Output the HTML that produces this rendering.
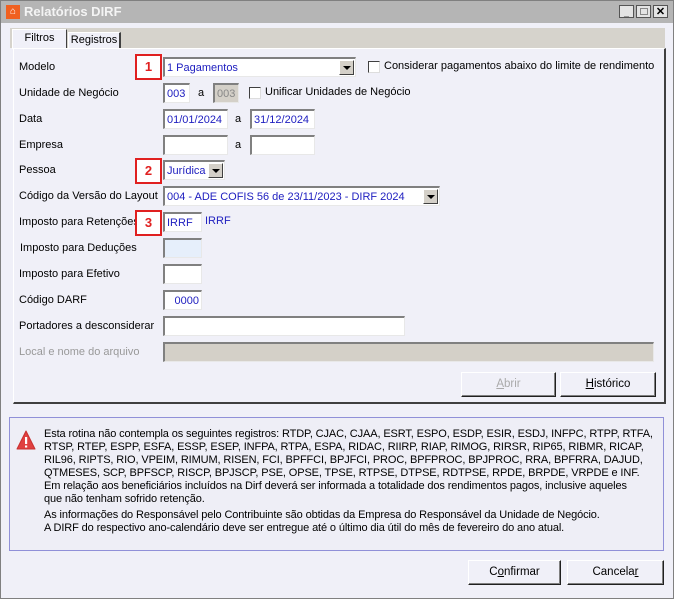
<!DOCTYPE html><html><head><meta charset="utf-8"><style>
*{margin:0;padding:0;box-sizing:border-box}
body{width:674px;height:599px;overflow:hidden;background:#f0f0f8;font-family:"Liberation Sans",sans-serif;font-size:11px;color:#000;position:relative}
.a{position:absolute;white-space:nowrap}
.lbl{position:absolute;left:19px;font-size:11px;white-space:nowrap}
.f{position:absolute;background:#fff;border-top:2px solid #808080;border-left:2px solid #808080;border-right:1px solid #e8e8e8;border-bottom:1px solid #e8e8e8;color:#2020c0;font-size:11px;padding:3px 0 0 2px;white-space:nowrap;overflow:hidden}
.dd{position:absolute;right:1px;top:1px;width:15px;bottom:1px;background:#d4d0c8;border:1px solid;border-color:#fff #404040 #404040 #fff}
.dd:after{content:"";position:absolute;left:3px;top:5px;border-left:4px solid transparent;border-right:4px solid transparent;border-top:4px solid #000}
.red{position:absolute;border:2px solid #e02020;color:#e02020;font-weight:bold;font-size:13px;text-align:center;width:27px;height:26px;line-height:22px;background:#fff}
.cb{position:absolute;width:12px;height:12px;background:#fff;border:1px solid #404040;border-right-color:#ddd;border-bottom-color:#ddd}
.btn{position:absolute;border:1px solid;border-color:#fff #202020 #202020 #fff;box-shadow:inset -1px -1px 0 #808080;background:#f0f0f8;text-align:center;font-size:11.5px;line-height:22px}
.info{position:absolute;left:44px;top:428px;font-size:11px;line-height:13px;letter-spacing:-0.12px;white-space:nowrap}
</style></head><body>
<div class="a" style="left:0;top:0;width:674px;height:599px;border:1px solid #808080"></div>
<div class="a" style="left:1px;top:1px;width:672px;height:22px;background:#b5b5b5"></div>
<div class="a" style="left:6px;top:5px;width:14px;height:14px;background:#f06020;color:#fff;font-size:10px;line-height:14px;text-align:center">⌂</div>
<div class="a" style="left:24px;top:4px;color:#f4f4f4;font-weight:bold;font-size:13px">Relatórios DIRF</div>
<div class="a" style="left:619px;top:5px;width:15px;height:13px;background:#e4e4e4;border:1px solid #555;font-size:9px;font-weight:bold;text-align:center;line-height:14px">_</div>
<div class="a" style="left:636px;top:5px;width:15px;height:13px;background:#e4e4e4;border:1px solid #555"><div style="position:absolute;left:3px;top:2px;width:8px;height:7px;border:1px solid #888"></div></div>
<div class="a" style="left:653px;top:5px;width:15px;height:13px;background:#e4e4e4;border:1px solid #555;font-size:11px;font-weight:bold;text-align:center;line-height:12px">✕</div>

<div class="a" style="left:10px;top:28px;width:655px;height:20px;background:#d6d3cc"></div>
<div class="a" style="left:12px;top:29px;width:55px;height:20px;background:#f0f0f8;border:1px solid #fff;border-right:1px solid #404040;border-bottom:none;text-align:center;line-height:17px">Filtros</div>
<div class="a" style="left:68px;top:32px;width:53px;height:17px;background:#f0f0f8;border:1px solid #fff;border-right:2px solid #404040;border-bottom:none;text-align:center;line-height:15px">Registros</div>
<div class="a" style="left:13px;top:48px;width:653px;height:356px;border:1px solid #fff;border-right:2px solid #404040;border-bottom:2px solid #404040"></div>

<div class="lbl" style="top:61px">Modelo</div>
<div class="red" style="left:135px;top:54px">1</div>
<div class="f" style="left:163px;top:57px;width:193px;height:20px">1 Pagamentos<div class="dd"></div></div>
<div class="cb" style="left:368px;top:61px"></div>
<div class="a" style="left:384px;top:60px">Considerar pagamentos abaixo do limite de rendimento</div>

<div class="lbl" style="top:87px">Unidade de Negócio</div>
<div class="f" style="left:163px;top:83px;width:27px;height:20px">003</div>
<div class="a" style="left:198px;top:87px">a</div>
<div class="f" style="left:213px;top:83px;width:26px;height:20px;background:#d4d0c8;color:#888">003</div>
<div class="cb" style="left:249px;top:87px"></div>
<div class="a" style="left:265px;top:86px">Unificar Unidades de Negócio</div>

<div class="lbl" style="top:113px">Data</div>
<div class="f" style="left:163px;top:109px;width:65px;height:20px">01/01/2024</div>
<div class="a" style="left:235px;top:113px">a</div>
<div class="f" style="left:250px;top:109px;width:65px;height:20px">31/12/2024</div>

<div class="lbl" style="top:139px">Empresa</div>
<div class="f" style="left:163px;top:135px;width:65px;height:20px"></div>
<div class="a" style="left:235px;top:139px">a</div>
<div class="f" style="left:250px;top:135px;width:65px;height:20px"></div>

<div class="lbl" style="top:164px">Pessoa</div>
<div class="red" style="left:135px;top:158px">2</div>
<div class="f" style="left:163px;top:160px;width:62px;height:20px">Jurídica<div class="dd"></div></div>

<div class="lbl" style="top:190px">Código da Versão do Layout</div>
<div class="f" style="left:163px;top:186px;width:277px;height:20px">004 - ADE COFIS 56 de 23/11/2023 - DIRF 2024<div class="dd"></div></div>

<div class="lbl" style="top:216px">Imposto para Retenções</div>
<div class="red" style="left:135px;top:210px">3</div>
<div class="f" style="left:163px;top:212px;width:39px;height:20px">IRRF</div>
<div class="a" style="left:205px;top:215px;color:#2020c0">IRRF</div>

<div class="lbl" style="top:242px;left:20px">Imposto para Deduções</div>
<div class="f" style="left:163px;top:238px;width:39px;height:20px;background:#e6effb"></div>

<div class="lbl" style="top:268px">Imposto para Efetivo</div>
<div class="f" style="left:163px;top:264px;width:39px;height:20px"></div>

<div class="lbl" style="top:294px">Código DARF</div>
<div class="f" style="left:163px;top:290px;width:39px;height:20px;text-align:right;padding-right:2px">0000</div>

<div class="lbl" style="top:320px">Portadores a desconsiderar</div>
<div class="f" style="left:163px;top:316px;width:242px;height:20px"></div>

<div class="lbl" style="top:346px;color:#999">Local e nome do arquivo</div>
<div class="f" style="left:163px;top:342px;width:491px;height:20px;background:#d4d0c8"></div>

<div class="btn" style="left:461px;top:372px;width:95px;height:25px;color:#aaa"><u>A</u>brir</div>
<div class="btn" style="left:560px;top:372px;width:96px;height:25px"><u>H</u>istórico</div>

<div class="a" style="left:9px;top:417px;width:655px;height:134px;border:1px solid #9090d8;background:#eeeef6"></div>
<svg class="a" style="left:16px;top:430px" width="20" height="20" viewBox="0 0 20 20"><path d="M10 1 L19 19 L1 19 Z" fill="#e04040" stroke="#c83030" stroke-linejoin="round"/><rect x="9" y="7" width="2.2" height="7" fill="#fff"/><rect x="9" y="15.5" width="2.2" height="2" fill="#fff"/></svg>
<div class="info">Esta rotina não contempla os seguintes registros: RTDP, CJAC, CJAA, ESRT, ESPO, ESDP, ESIR, ESDJ, INFPC, RTPP, RTFA,<br>RTSP, RTEP, ESPP, ESFA, ESSP, ESEP, INFPA, RTPA, ESPA, RIDAC, RIIRP, RIAP, RIMOG, RIRSR, RIP65, RIBMR, RICAP,<br>RIL96, RIPTS, RIO, VPEIM, RIMUM, RISEN, FCI, BPFFCI, BPJFCI, PROC, BPFPROC, BPJPROC, RRA, BPFRRA, DAJUD,<br>QTMESES, SCP, BPFSCP, RISCP, BPJSCP, PSE, OPSE, TPSE, RTPSE, DTPSE, RDTPSE, RPDE, BRPDE, VRPDE e INF.<br>Em relação aos beneficiários incluídos na Dirf deverá ser informada a totalidade dos rendimentos pagos, inclusive aqueles<br>que não tenham sofrido retenção.<br><div style="height:3px"></div>As informações do Responsável pelo Contribuinte são obtidas da Empresa do Responsável da Unidade de Negócio.<br>A DIRF do respectivo ano-calendário deve ser entregue até o último dia útil do mês de fevereiro do ano atual.</div>

<div class="btn" style="left:468px;top:560px;width:93px;height:25px">C<u>o</u>nfirmar</div>
<div class="btn" style="left:567px;top:560px;width:97px;height:25px">Cancela<u>r</u></div>
</body></html>
